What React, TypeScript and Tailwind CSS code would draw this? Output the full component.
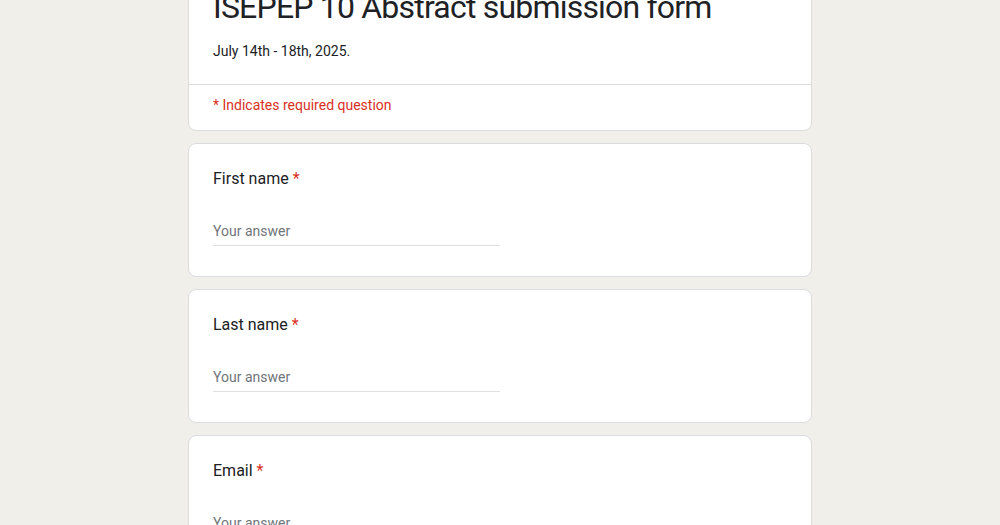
import React from 'react';

const questions = ['First name', 'Last name', 'Email'];

function Question({ label }: { label: string }) {
  return (
    <div className="bg-white border border-[#dadce0] rounded-lg px-6 pt-[23px] pb-[30px]">
      <div className="text-base leading-6 text-[#202124]">
        {label} <span className="text-[#d93025]">*</span>
      </div>
      <div className="mt-[30px] w-1/2 border-b border-[#e0e0e0] pb-1 text-sm leading-5 text-[#70757a]">
        Your answer
      </div>
    </div>
  );
}

export default function App() {
  return (
    <div
      className="min-h-screen bg-[#f1efe9] flex justify-center overflow-hidden"
      style={{ fontFamily: 'Roboto, "Liberation Sans", sans-serif' }}
    >
      <div className="w-[624px] -mt-[36px] flex flex-col gap-3 pb-6">
        <div className="bg-white border border-[#dadce0] rounded-lg">
          <div className="px-6 pt-[22px] pb-[23px]">
            <h1 className="text-[32px] leading-10 tracking-[-0.8px] text-[#202124] font-normal">
              ISEPEP 10 Abstract submission form
            </h1>
            <p className="mt-[14px] text-sm leading-5 text-[#202124]">July 14th - 18th, 2025.</p>
          </div>
          <div className="border-t border-[#dadce0] px-6 pt-[10px] pb-[15px] text-sm leading-5 text-[#d93025]">
            * Indicates required question
          </div>
        </div>
        {questions.map((q) => (
          <Question key={q} label={q} />
        ))}
      </div>
    </div>
  );
}
